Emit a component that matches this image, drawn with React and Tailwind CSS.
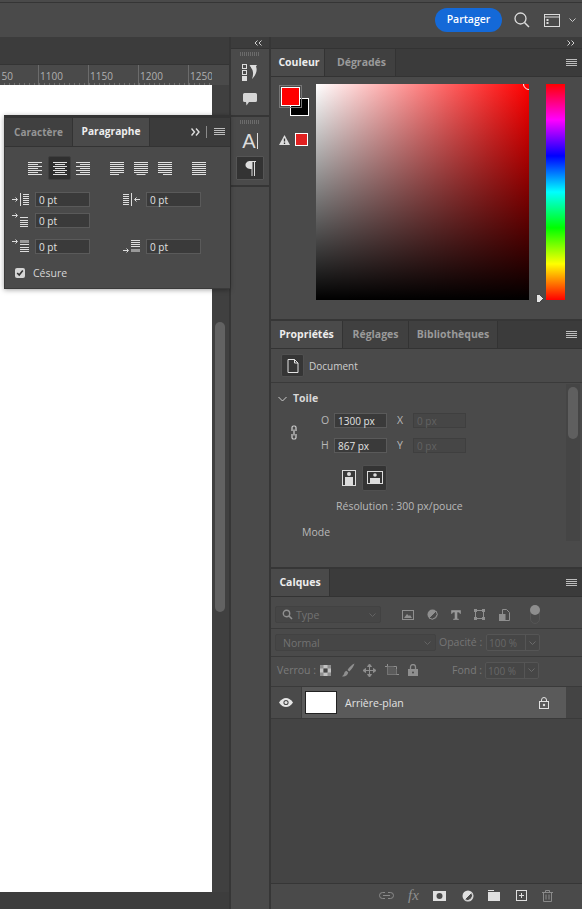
import React from "react";

const font = { fontFamily: '"Open Sans","Noto Sans",sans-serif' };

function Lines({ rows, w = 15, h = 15, stroke = "#e0e0e0", className = "" }) {
  return (
    <svg width={w} height={h} viewBox={`0 0 ${w} ${h}`} className={className}>
      {rows.map((r, i) => (
        <line key={i} x1={r[0]} x2={r[1]} y1={r[2] + 0.5} y2={r[2] + 0.5} stroke={stroke} strokeWidth="1" />
      ))}
    </svg>
  );
}

const ys = [1, 3, 5, 7, 9, 11, 13];
const alignLeft = [14, 10, 14, 10, 14, 10, 14].map((x, i) => [0, x, ys[i]]);
const alignCenter = [14, 10, 14, 10, 14, 10, 14].map((x, i) => [(14 - x) / 2, (14 + x) / 2, ys[i]]);
const alignRight = [14, 10, 14, 10, 14, 10, 14].map((x, i) => [14 - x, 14, ys[i]]);
const justL = [14, 14, 14, 14, 14, 14, 9].map((x, i) => [0, x, ys[i]]);
const justC = [14, 14, 14, 14, 14, 14, 9].map((x, i) => [(14 - x) / 2, (14 + x) / 2, ys[i]]);
const justR = [14, 14, 14, 14, 14, 14, 9].map((x, i) => [14 - x, 14, ys[i]]);
const justF = ys.map((y) => [0, 14, y]);

function Hamburger({ className = "" }) {
  return <Lines w={11} h={8} rows={[[0, 11, 0], [0, 11, 2], [0, 11, 4], [0, 11, 6]]} stroke="#bdbdbd" className={className} />;
}

function Tab({ children, active, w, pad }) {
  return (
    <div
      className={`flex items-center justify-center h-full text-[10.5px] font-bold border-r border-[#333333] ${active ? "bg-[#4a4a4a] text-[#ededed]" : "bg-[#404040] text-[#9a9a9a]"} ${pad ? "pl-[3px]" : ""}`}
      style={{ width: w }}
    >
      {children}
    </div>
  );
}

function TabBar({ tabs }) {
  return (
    <div className="flex items-stretch h-[28px] bg-[#3b3b3b] border-b border-[#333333] shrink-0">
      {tabs.map((t) => (
        <Tab key={t[0]} active={t[2]} w={t[1]} pad={t[3]}>{t[0]}</Tab>
      ))}
      <div className="flex-1 flex items-center justify-end pr-[5px]">
        <Hamburger />
      </div>
    </div>
  );
}

function Field({ v, w = 55, disabled }) {
  return (
    <div
      className={`h-[15px] flex items-center pl-[3px] text-[10px] leading-none border ${disabled ? "bg-[#464646] border-[#3f3f3f] text-[#626262]" : "bg-[#3a3a3a] border-[#5a5a5a] text-[#e2e2e2]"}`}
      style={{ width: w }}
    >
      {v}
    </div>
  );
}

function IndL() {
  return (
    <svg width="18" height="15" viewBox="0 0 18 15">
      <path d="M0 7.500h5M3.500 5.500l2 2-2 2" stroke="#ddd" fill="none" />
      <path d="M8.500 1v13" stroke="#ddd" />
      <path d="M11 2.500h6M11 4.500h6M11 6.500h6M11 8.500h6M11 10.500h6M11 12.500h6" stroke="#ddd" />
    </svg>
  );
}
function IndR() {
  return (
    <svg width="18" height="15" viewBox="0 0 18 15">
      <path d="M0 2.500h6M0 4.500h6M0 6.500h6M0 8.500h6M0 10.500h6M0 12.500h6" stroke="#ddd" />
      <path d="M8.500 1v13" stroke="#ddd" />
      <path d="M17 7.500h-5M13.500 5.500l-2 2 2 2" stroke="#ddd" fill="none" />
    </svg>
  );
}
function IndFirst() {
  return (
    <svg width="18" height="15" viewBox="0 0 18 15">
      <path d="M0 2.500h5M3.500 .5l2 2-2 2" stroke="#ddd" fill="none" />
      <path d="M8 4.500h8M8 7.500h8M8 9.500h8M8 11.500h8M8 13.500h8" stroke="#ddd" />
    </svg>
  );
}
function SpaceBefore() {
  return (
    <svg width="18" height="15" viewBox="0 0 18 15">
      <path d="M0 2.500h5M3.500 .5l2 2-2 2" stroke="#ddd" fill="none" />
      <rect x="8" y="1" width="9" height="3" fill="#999" />
      <path d="M8 5.500h9M8 8.500h9M8 10.500h9M8 12.500h9" stroke="#ddd" />
    </svg>
  );
}
function SpaceAfter() {
  return (
    <svg width="18" height="15" viewBox="0 0 18 15">
      <path d="M0 11.500h5M3.500 9.500l2 2-2 2" stroke="#ddd" fill="none" />
      <path d="M8 1.500h9M8 3.500h9M8 5.500h9M8 7.500h9" stroke="#ddd" />
      <rect x="8" y="10" width="9" height="3" fill="#999" />
    </svg>
  );
}

function ParagraphPanel() {
  return (
    <div className="absolute left-[4px] top-[115px] w-[226px] h-[174px] flex flex-col bg-[#4a4a4a] border-t-[3px] border-t-[#333333] border-b border-b-[#3a3a3a] border-l border-l-[#3a3a3a] shadow-[0_1px_5px_rgba(0,0,0,0.35)]">
      <div className="flex h-[29px] items-stretch bg-[#3b3b3b] border-b border-[#333333] shrink-0">
        <div className="w-[68px] flex items-center justify-center text-[10px] font-bold text-[#959595] bg-[#404040] border-r border-[#333333]">Caractère</div>
        <div className="w-[77px] flex items-center justify-center text-[10.2px] font-bold text-[#ededed] bg-[#4a4a4a] border-r border-[#333333]">Paragraphe</div>
        <div className="flex-1 flex items-center justify-end pr-[5px] gap-[6px]">
          <svg width="9" height="8" viewBox="0 0 9 8"><path d="M.5.500l3 3.500-3 3.500M5 .5l3 3.500-3 3.500" stroke="#dddddd" strokeWidth="1.400" fill="none" /></svg>
          <div className="w-px h-[12px] bg-[#8a8a8a]" />
          <Hamburger className="ml-[1px]" />
        </div>
      </div>
      <div className="flex items-center mt-[9px] pl-[23px] h-[24px]">
        <Lines rows={alignLeft} />
        <div className="ml-[5px] w-[23px] h-[24px] rounded-[2px] bg-[#2f2f2f] border border-[#3e3e3e] flex items-center justify-center">
          <Lines rows={alignCenter} w={14} />
        </div>
        <Lines rows={alignRight} className="ml-[5px]" />
        <Lines rows={justL} className="ml-[19px]" />
        <Lines rows={justC} className="ml-[9px]" />
        <Lines rows={justR} className="ml-[9px]" />
        <Lines rows={justF} className="ml-[19px]" />
      </div>
      <div className="flex items-center mt-[12px] pl-[7px]">
        <IndL />
        <div className="ml-[5px]"><Field v="0 pt" /></div>
        <div className="ml-[33px]"><IndR /></div>
        <div className="ml-[5px]"><Field v="0 pt" /></div>
      </div>
      <div className="flex items-center mt-[6px] pl-[7px]">
        <IndFirst />
        <div className="ml-[5px]"><Field v="0 pt" /></div>
      </div>
      <div className="flex items-center mt-[11px] pl-[7px]">
        <SpaceBefore />
        <div className="ml-[5px]"><Field v="0 pt" /></div>
        <div className="ml-[33px]"><SpaceAfter /></div>
        <div className="ml-[5px]"><Field v="0 pt" /></div>
      </div>
      <div className="flex items-center mt-[14px] pl-[10px] gap-[8px]">
        <div className="w-[10px] h-[10px] rounded-[2px] bg-[#d5d5d5] flex items-center justify-center">
          <svg width="8" height="8" viewBox="0 0 8 8"><path d="M1.200 4l2 2 3.600-4.400" stroke="#333" strokeWidth="1.600" fill="none" /></svg>
        </div>
        <span className="text-[10.5px] text-[#d6d6d6] leading-none">Césure</span>
      </div>
    </div>
  );
}

function Ruler() {
  return (
    <div className="relative h-[20px] shrink-0 flex bg-[#4a4a4a] overflow-hidden">
      <div className="w-[212px] flex overflow-hidden">
        <div className="w-[38px] shrink-0 flex justify-end pr-[25px] text-[10px] leading-[23px] text-[#b0b0b0]">50</div>
        {["1100", "1150", "1200", "1250"].map((t) => (
          <div key={t} className="w-[50px] shrink-0 border-l border-[#6b6b6b] pl-[1px] text-[10px] leading-[23px] text-[#b0b0b0]">{t}</div>
        ))}
      </div>
      <div className="absolute left-0 bottom-0 w-[212px] h-[2px] bg-[repeating-linear-gradient(90deg,transparent_0,transparent_4px,#6f6f6f_4px,#6f6f6f_5px)]" />
    </div>
  );
}

function DocColumn() {
  return (
    <div className="w-[229px] flex flex-col shrink-0 bg-[#414141]">
      <div className="h-[28px] bg-[#3c3c3c] border-b border-[#343434] shrink-0" />
      <Ruler />
      <div className="flex flex-1 min-h-0">
        <div className="w-[212px] bg-white" />
        <div className="flex-1 flex justify-start pl-[3px] bg-[#404040] pt-[237px]">
          <div className="w-[10px] h-[290px] rounded-full bg-[#626262]" />
        </div>
      </div>
      <div className="h-[17px] shrink-0 bg-[#3d3d3d]" />
    </div>
  );
}

function Grip() {
  return <div className="mx-auto mt-[3px] w-[20px] h-[4px] bg-[repeating-linear-gradient(90deg,#6b6b6b_0,#6b6b6b_1px,transparent_1px,transparent_2px)]" />;
}

function Dock() {
  return (
    <div className="w-[38px] flex flex-col shrink-0 bg-[#4a4a4a]">
      <div className="h-[12px] bg-[#3c3c3c] border-b border-[#333333] flex items-center justify-end pr-[7px] shrink-0">
        <svg width="8" height="6" viewBox="0 0 8 6"><path d="M3.500.500L1 3l2.500 2.500M7.500.500L5 3l2.500 2.500" stroke="#d0d0d0" fill="none" /></svg>
      </div>
      <div className="h-[68px] border-b-2 border-[#363636] flex flex-col shrink-0">
        <Grip />
        <div className="flex justify-center mt-[8px]">
          <svg width="16" height="17" viewBox="0 0 16 17">
            <rect x=".5" y=".5" width="4" height="4" fill="none" stroke="#ddd" />
            <rect x=".5" y="6.500" width="4" height="4" fill="none" stroke="#ddd" />
            <rect x="0" y="12" width="5" height="5" fill="#ddd" />
            <path d="M8 1h7l-1 1.500c1.500 3 .5 8-4 12.500 1.500-4 1.500-8-.5-10.500z" fill="#ddd" />
            <path d="M8 1l2 3" stroke="#ddd" />
          </svg>
        </div>
        <div className="flex justify-center mt-[11px]">
          <svg width="14" height="14" viewBox="0 0 14 14"><path d="M1.500 1h11A1.500 1.500 0 0 1 14 2.500v6A1.500 1.500 0 0 1 12.500 10H6l-2.500 3.500L3 10H1.500A1.500 1.500 0 0 1 0 8.500v-6A1.500 1.500 0 0 1 1.500 1z" fill="#d6d6d6" /></svg>
        </div>
      </div>
      <div className="flex flex-col">
        <Grip />
        <div className="flex justify-center mt-[6px] h-[22px] items-center">
          <span className="text-[20px] leading-none text-[#dcdcdc] font-normal" style={{ fontFamily: '"Liberation Sans",sans-serif' }}>A</span>
          <span className="w-px h-[16px] bg-[#dcdcdc] ml-[1px]" />
        </div>
        <div className="mx-auto mt-[4px] w-[28px] h-[24px] bg-[#333333] border border-[#555555] rounded-[1px] flex items-center justify-center">
          <svg width="11" height="15" viewBox="0 0 11 15"><path d="M5 0h6v1h-1v14H9V1H7.500v14h-1V8C3 8 .5 6.500.5 4S3 0 5 0z" fill="#dcdcdc" /></svg>
        </div>
        <div className="mt-[5px] h-[2px] bg-[#363636]" />
      </div>
    </div>
  );
}

function ColorPanel() {
  return (
    <div className="h-[272px] flex flex-col shrink-0 bg-[#4a4a4a] border-b-2 border-[#363636]">
      <TabBar tabs={[["Couleur", 54, true, true], ["Dégradés", 71, false, true]]} />
      <div className="flex flex-1 pt-[7px] relative">
        <div className="w-[45px] shrink-0 pl-[10px] pt-[3px]">
          <div className="relative w-[30px] h-[30px]">
            <div className="absolute left-[9px] top-[11px] w-[19px] h-[18px] bg-black border border-white" />
            <div className="absolute left-0 top-0 w-[19px] h-[19px] bg-[#ff0000] border border-white outline outline-offset-1 outline-[#777777]" />
          </div>
          <div className="flex items-center mt-[16px] -ml-[2px] gap-[5px]">
            <svg width="11" height="12" viewBox="0 0 11 12"><path d="M5.500 1L11 11H0z" fill="#dddddd" /><path d="M5.500 4.500v3M5.500 8.500v1.500" stroke="#333" strokeWidth="1.300" /></svg>
            <div className="w-[13px] h-[13px] bg-[#e12020] border border-white" />
          </div>
        </div>
        <div className="relative w-[213px] h-[216px] shrink-0 overflow-hidden bg-[linear-gradient(to_top,#000000,rgba(0,0,0,0)),linear-gradient(to_right,#ffffff,#ff0000)]">
          <div className="absolute right-[-6px] top-[-6px] w-[12px] h-[12px] rounded-full border border-white" />
        </div>
        <div className="w-[17px] shrink-0 relative">
          <svg width="8" height="9" viewBox="0 0 8 9" className="absolute left-[7px] top-[210px]"><path d="M.5.500h3L7.500 4.500 3.500 8.500h-3z" fill="#e5e5e5" stroke="#222" strokeWidth=".7" /></svg>
        </div>
        <div className="w-[19px] h-[216px] shrink-0 bg-[linear-gradient(to_bottom,#ff0000,#ff00ff_16.6%,#0000ff_33.3%,#00ffff_50%,#00ff00_66.6%,#ffff00_83.3%,#ff0000)]" />
      </div>
    </div>
  );
}

function PropertiesPanel() {
  return (
    <div className="h-[248px] flex flex-col shrink-0 bg-[#4a4a4a] border-b-2 border-[#363636]">
      <TabBar tabs={[["Propriétés", 72, true], ["Réglages", 66, false], ["Bibliothèques", 89, false]]} />
      <div className="h-[34px] shrink-0 flex items-center pl-[10px] gap-[5px] border-b border-[#3a3a3a]">
        <div className="w-[23px] h-[23px] bg-[#353535] border border-[#505050] rounded-[2px] flex items-center justify-center">
          <svg width="12" height="14" viewBox="0 0 12 14"><path d="M1 .5h6.500L11 4v9.500H1zM7.500.5V4H11" fill="none" stroke="#e4e4e4" /></svg>
        </div>
        <span className="text-[10px] text-[#cfcfcf] mt-[1px]">Document</span>
      </div>
      <div className="flex flex-1 min-h-0">
        <div className="flex-1 flex flex-col">
          <div className="flex items-center pl-[7px] mt-[10px] gap-[6px] h-[12px]">
            <svg width="9" height="6" viewBox="0 0 9 6"><path d="M.5 1l4 4 4-4" stroke="#cccccc" fill="none" /></svg>
            <span className="text-[10.5px] font-bold text-[#d8d8d8]">Toile</span>
          </div>
          <div className="flex mt-[8px]">
            <div className="w-[43px] shrink-0 flex items-center justify-end pb-[1px] pr-[16px] pl-[20px]">
              <svg width="8" height="15" viewBox="0 0 8 15" className="shrink-0"><path d="M2 6V2.500A1.500 1.500 0 0 1 3.500 1h1A1.500 1.500 0 0 1 6 2.500V6M2 9v3.500A1.500 1.500 0 0 0 3.500 14h1A1.500 1.500 0 0 0 6 12.500V9M4 4.500v6" stroke="#d0d0d0" strokeWidth="1.200" fill="none" /></svg>
            </div>
            <div className="flex flex-col gap-[9px] ml-[7px]">
              {[["O", "1300 px", "X"], ["H", "867 px", "Y"]].map((r) => (
                <div key={r[0]} className="flex items-center">
                  <span className="w-[13px] text-[10.5px] text-[#b8b8b8]">{r[0]}</span>
                  <Field v={r[1]} w={53} />
                  <span className="w-[26px] text-center text-[10.5px] text-[#b8b8b8]">{r[2]}</span>
                  <Field v="0 px" w={53} disabled />
                </div>
              ))}
            </div>
          </div>
          <div className="flex items-center mt-[11px] pl-[71px] gap-[6px]">
            <svg width="14" height="16" viewBox="0 0 14 16"><rect x=".5" y=".5" width="13" height="15" fill="#3a3a3a" stroke="#dddddd" /><circle cx="7" cy="4" r="2" fill="#dddddd" /><path d="M3 7h8v8H3z" fill="#dddddd" /></svg>
            <div className="w-[25px] h-[26px] bg-[#343434] border border-[#505050] rounded-[2px] flex items-center justify-center">
              <svg width="16" height="13" viewBox="0 0 16 13"><rect x=".5" y=".5" width="15" height="12" fill="none" stroke="#dddddd" /><circle cx="8" cy="4" r="1.800" fill="#dddddd" /><path d="M3 12V7h10v5z" fill="#dddddd" /></svg>
            </div>
          </div>
          <div className="mt-[8px] pl-[65px] text-[10.5px] text-[#b9b9b9] leading-[14px]">Résolution : 300 px/pouce</div>
          <div className="mt-[12px] pl-[31px] text-[10.5px] text-[#b9b9b9] leading-[14px]">Mode</div>
        </div>
        <div className="w-[14px] mr-[2px] h-[157px] mt-[1px] bg-[#454545] flex justify-center pt-[3px]">
          <div className="w-[10px] h-[52px] rounded-full bg-[#5f5f5f]" />
        </div>
      </div>
    </div>
  );
}

function Select({ label, w, search }) {
  return (
    <div className="h-[17px] flex items-center bg-[#464646] border border-[#424242] rounded-[2px] pl-[7px] pr-[4px]" style={{ width: w }}>
      {search && (
        <svg width="11" height="11" viewBox="0 0 11 11" className="mr-[3px] -ml-[1px]"><circle cx="4.500" cy="4.500" r="3.200" fill="none" stroke="#909090" strokeWidth="1.400" /><path d="M7 7l3 3" stroke="#909090" strokeWidth="1.600" /></svg>
      )}
      <span className="text-[10.5px] text-[#737373] flex-1 leading-none mt-[1px]">{label}</span>
      <svg width="7" height="4" viewBox="0 0 7 4"><path d="M.5.500l3 3 3-3" stroke="#636363" fill="none" /></svg>
    </div>
  );
}

function Percent() {
  return (
    <div className="w-[54px] h-[17px] flex items-center bg-[#464646] border border-[#585858] rounded-[2px] opacity-80">
      <span className="flex-1 pl-[2px] text-[10px] text-[#6f6f6f] leading-none mt-[1px]">100 %</span>
      <div className="w-[14px] h-full border-l border-[#585858] flex items-center justify-center">
        <svg width="7" height="4" viewBox="0 0 7 4"><path d="M.5.500l3 3 3-3" stroke="#737373" fill="none" /></svg>
      </div>
    </div>
  );
}

function LayersPanel() {
  return (
    <div className="flex-1 min-h-0 flex flex-col bg-[#444444]">
      <TabBar tabs={[["Calques", 59, true]]} />
      <div className="h-[32px] shrink-0 flex items-center pl-[4px] pt-[4px] bg-[#4a4a4a] border-b border-[#3a3a3a]">
        <Select label="Type" w={106} search />
        <div className="flex items-center ml-[21px]">
          <svg width="12" height="10" viewBox="0 0 12 10"><rect x=".5" y=".5" width="11" height="9" fill="none" stroke="#8f8f8f" /><path d="M2 8l3-4 2 2 1-1 2 3z" fill="#8f8f8f" /></svg>
          <svg width="11" height="11" viewBox="0 0 11 11" className="ml-[13px]"><circle cx="5.500" cy="5.500" r="5" fill="#8f8f8f" /><path d="M2 9L9 2a5 5 0 0 1-7 7z" fill="#4a4a4a" stroke="#8f8f8f" /></svg>
          <svg width="10" height="10" viewBox="0 0 10 10" className="ml-[13px]"><path d="M.5.500h9v3H9L8 2H6v7h1.500v.5h-5V9H4V2H2L1 3.500H.5z" fill="#999999" stroke="#999999" strokeWidth=".6" /></svg>
          <svg width="11" height="11" viewBox="0 0 11 11" className="ml-[13px]"><path d="M1.500 1.500h8v8h-8z" fill="none" stroke="#8f8f8f" /><path d="M0 0h3v3H0zM8 0h3v3H8zM0 8h3v3H0zM8 8h3v3H8z" fill="#8f8f8f" /></svg>
          <svg width="11" height="12" viewBox="0 0 11 12" className="ml-[14px]"><path d="M3.500.500h4l3 3v8h-7z" fill="none" stroke="#8f8f8f" /><rect x="0" y="5" width="6.500" height="7" fill="#8f8f8f" /></svg>
          <div className="relative ml-[20px] w-[10px] h-[18px] rounded-full border border-[#555555]">
            <div className="absolute left-[-1px] top-[-2px] w-[10px] h-[10px] rounded-full bg-[#8e8e8e]" />
          </div>
        </div>
      </div>
      <div className="h-[28px] shrink-0 flex items-center pl-[4px] bg-[#4a4a4a] border-b border-[#3a3a3a]">
        <Select label="Normal" w={161} />
        <span className="ml-[3px] w-[47px] text-[10.5px] text-[#757575] leading-none">Opacité :</span>
        <Percent />
      </div>
      <div className="h-[30px] shrink-0 flex items-center pl-[6px] pb-[3px] bg-[#4a4a4a] border-b border-[#3a3a3a]">
        <span className="w-[43px] text-[10.5px] text-[#7b7b7b] leading-none">Verrou :</span>
        <svg width="11" height="11" viewBox="0 0 11 11"><rect width="11" height="11" fill="#8f8f8f" /><path d="M3.500 0h4v3.500h-4zM0 3.500h3.500v4H0zM7.500 3.500H11v4H7.500zM3.500 7.500h4V11h-4z" fill="#c2c2c2" /><path d="M3.500 3.500h4v4h-4z" fill="#444444" /></svg>
        <svg width="13" height="14" viewBox="0 0 13 14" className="ml-[11px]"><path d="M12.500.500C10 1.500 7 4.500 5.500 7l1.800 1.500C9.500 6.500 12 3 12.500.500zM4.500 7.800C3 8 2.500 9.500 2 11c-.3 1-1 1.800-2 2.300 2.500.6 5.500-.2 6.300-3.700z" fill="#8f8f8f" /></svg>
        <svg width="13" height="13" viewBox="0 0 13 13" className="ml-[8px]"><path d="M6.500 0l2 2.500h-4zM6.500 13l2-2.500h-4zM0 6.500l2.500-2v4zM13 6.500l-2.500-2v4zM1.500 6.500h10M6.500 1.500v10" stroke="#8f8f8f" fill="#8f8f8f" /></svg>
        <svg width="14" height="13" viewBox="0 0 14 13" className="ml-[9px]"><path d="M0 2.500h11.500V11M2.500 0v10.500H14" stroke="#8f8f8f" strokeDasharray="none" fill="none" /><path d="M2.500 2.500h6l3 3v5h-9z" fill="#5b5b5b" stroke="none" /></svg>
        <svg width="10" height="12" viewBox="0 0 10 12" className="ml-[9px]"><path d="M2.500 5V3a2.500 2.500 0 0 1 5 0v2" stroke="#8f8f8f" strokeWidth="1.300" fill="none" /><rect y="5" width="10" height="7" fill="#8f8f8f" /><circle cx="5" cy="8.500" r="1" fill="#4a4a4a" /></svg>
        <span className="ml-[34px] w-[33px] text-[10.5px] text-[#7b7b7b] leading-none">Fond :</span>
        <Percent />
      </div>
      <div className="h-[32px] shrink-0 flex border-b border-[#3a3a3a]">
        <div className="w-[31px] bg-[#4a4a4a] flex items-center justify-center border-r border-[#3e3e3e]">
          <svg width="14" height="9" viewBox="0 0 14 9"><path d="M0 4.500C2 1.500 4.500 0 7 0s5 1.500 7 4.500C12 7.500 9.500 9 7 9S2 7.500 0 4.500z" fill="#e6e6e6" /><circle cx="7" cy="4.500" r="2.600" fill="#4a4a4a" /><circle cx="7" cy="4.500" r="1.500" fill="#e6e6e6" /></svg>
        </div>
        <div className="w-[264px] bg-[#5a5a5a] flex items-center pl-[3px]">
          <div className="w-[32px] h-[23px] bg-white border border-[#222222]" />
          <span className="ml-[8px] text-[10.5px] text-[#e2e2e2] leading-none flex-1 mt-[1px]">Arrière-plan</span>
          <svg width="10" height="12" viewBox="0 0 10 12" className="mr-[17px]"><path d="M2.500 5V3a2.500 2.500 0 0 1 5 0v2" stroke="#e2e2e2" fill="none" /><rect x=".5" y="4.500" width="9" height="7" fill="none" stroke="#e2e2e2" /><circle cx="5" cy="8" r="1.200" fill="#e2e2e2" /></svg>
        </div>
      </div>
      <div className="flex-1" />
      <div className="h-[26px] shrink-0 flex items-center bg-[#4a4a4a] border-t border-[#363636] pl-[108px] pb-[2px]">
        <svg width="15" height="8" viewBox="0 0 15 8"><path d="M6 .5H3.500a3 3 0 0 0 0 6H6M9 .5h2.500a3 3 0 0 1 0 6H9M4 3.500h7" stroke="#8a8a8a" fill="none" /></svg>
        <span className="ml-[14px] w-[13px] text-[15px] italic text-[#8f8f8f] leading-none" style={{ fontFamily: '"Liberation Serif",serif' }}>fx</span>
        <svg width="13" height="10" viewBox="0 0 13 10" className="ml-[12px]"><rect width="13" height="10" fill="#dfdfdf" /><circle cx="6.500" cy="5" r="3" fill="#4a4a4a" /></svg>
        <svg width="12" height="12" viewBox="0 0 12 12" className="ml-[16px]"><circle cx="6" cy="6" r="5.500" fill="#dfdfdf" /><path d="M2.500 9.500l7-7a5 5 0 0 1-7 7z" fill="#4a4a4a" stroke="#dfdfdf" /></svg>
        <svg width="12" height="11" viewBox="0 0 12 11" className="ml-[14px]"><path d="M0 0h6v1H0zM0 2h12v9H0z" fill="#dfdfdf" /></svg>
        <svg width="11" height="11" viewBox="0 0 11 11" className="ml-[16px]"><rect x=".5" y=".5" width="10" height="10" fill="none" stroke="#dfdfdf" /><path d="M5.500 3v5M3 5.500h5" stroke="#dfdfdf" /></svg>
        <svg width="11" height="12" viewBox="0 0 11 12" className="ml-[15px]"><path d="M0 2.500h11M3.500 2V.5h4V2M1.500 2.500v9h8v-9M4 4.500v5M7 4.500v5" stroke="#8a8a8a" fill="none" /></svg>
      </div>
    </div>
  );
}

export default function App() {
  return (
    <div className="relative w-[582px] h-[909px] overflow-hidden flex flex-col bg-[#4a4a4a]" style={font}>
      <div className="h-[37px] shrink-0 flex items-center justify-end pr-[6px] pb-[1px] bg-[#4a4a4a] border-t-[1px] border-t-[#353535] border-b border-b-[#333333] mt-[2px] -mb-[2px]">
        <div className="w-[67px] h-[24px] rounded-full bg-[#1469d8] flex items-center justify-center text-[10.5px] font-semibold text-white">Partager</div>
        <svg width="16" height="16" viewBox="0 0 16 16" className="ml-[12px]"><circle cx="6.500" cy="6.500" r="5.500" fill="none" stroke="#dcdcdc" strokeWidth="1.300" /><path d="M10.500 10.500L15 15" stroke="#dcdcdc" strokeWidth="1.500" /></svg>
        <svg width="16" height="13" viewBox="0 0 16 13" className="ml-[14px]"><rect x=".5" y=".5" width="15" height="12" fill="none" stroke="#dcdcdc" /><path d="M.5 3h15" stroke="#dcdcdc" /><rect x="2.500" y="5" width="2" height="2" fill="#dcdcdc" /><rect x="2.500" y="8" width="2" height="2" fill="#dcdcdc" /></svg>
        <svg width="7" height="4" viewBox="0 0 7 4" className="ml-[9px]"><path d="M.5.500l3 3 3-3" stroke="#c8c8c8" fill="none" /></svg>
      </div>
      <div className="flex flex-1 min-h-0">
        <DocColumn />
        <div className="w-[2px] bg-[#363636] shrink-0" />
        <Dock />
        <div className="w-[2px] bg-[#363636] shrink-0" />
        <div className="flex-1 flex flex-col min-w-0">
          <div className="h-[12px] bg-[#3c3c3c] border-b border-[#333333] flex items-center justify-end pr-[7px] shrink-0">
            <svg width="8" height="6" viewBox="0 0 8 6"><path d="M.5.500L3 3 .5 5.500M4.500.500L7 3 4.500 5.500" stroke="#d0d0d0" fill="none" /></svg>
          </div>
          <ColorPanel />
          <PropertiesPanel />
          <LayersPanel />
        </div>
      </div>
      <ParagraphPanel />
    </div>
  );
}
